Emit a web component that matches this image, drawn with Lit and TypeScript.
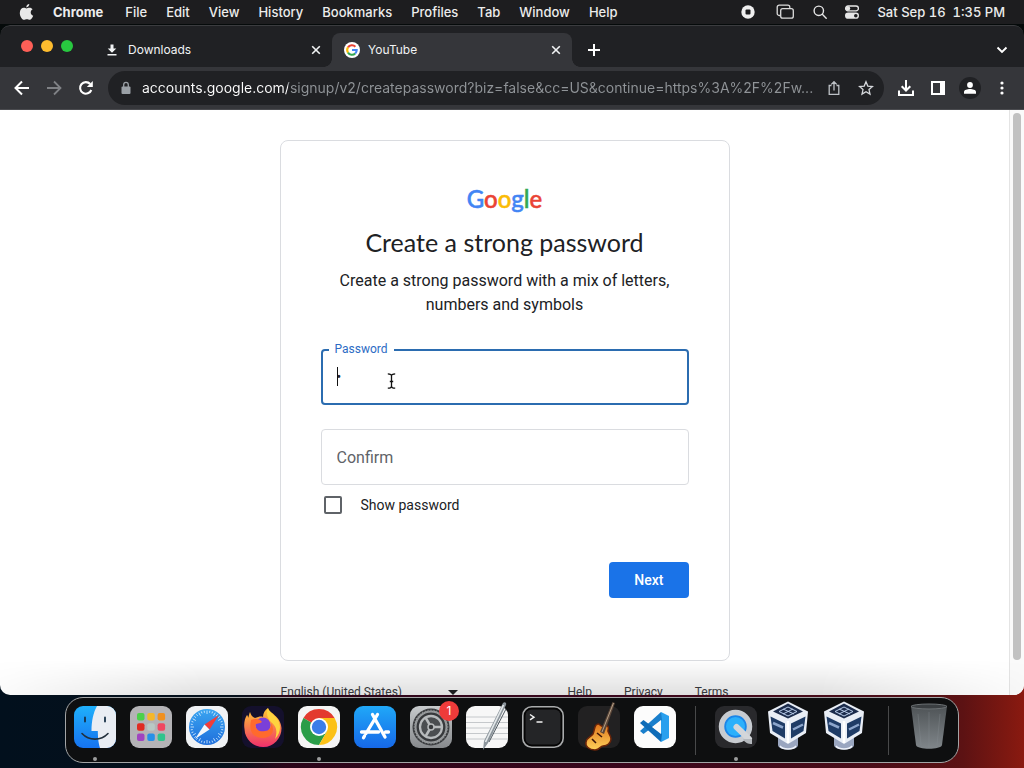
import { LitElement, html, css, svg, TemplateResult } from "lit";
import { customElement, property } from "lit/decorators.js";

const reset = css`
  *, *::before, *::after { box-sizing: border-box; }
  button { appearance: none; background: none; border: 0; padding: 0; margin: 0; font: inherit; color: inherit; }
  svg { display: block; }
  a { color: inherit; text-decoration: none; }
`;

@customElement("menu-bar")
class MenuBar extends LitElement {
  static styles = [reset, css`
    :host { display: block; }
    .bar { display: flex; align-items: center; height: 24px; padding: 0 19px; background: #1d1d1f; color: #ececec;
      font: 500 13px/24px Inter, sans-serif; white-space: pre; }
    .menus { display: flex; align-items: center; gap: 19px; }
    .app { font-weight: 700; padding-right: 3px; }
    .status { display: flex; align-items: center; gap: 17px; margin-left: auto; font-variant-numeric: tabular-nums; }
    .rec { padding-right: 4px; }
  `];
  render() {
    return html`<header class="bar">
      <nav class="menus">
        <button aria-label="Apple menu"><svg width="15" height="18" viewBox="0 0 15 18" fill="#e8e8e8"><path d="M10.3 1c.1 1.900-1.300 3.300-3 3.400C7.200 2.600 8.600 1.100 10.300 1zM7.500 5.400c.8 0 1.500-.7 3-.7 1.400 0 2.500.7 3.100 1.500-2.800 1.700-2.300 5.500.6 6.600-.8 2.200-2 4-3.500 4-1 0-1.500-.6-2.800-.6-1.300 0-1.900.6-2.800.6C2.900 16.800.8 13 .8 9.900c0-3.200 2-5.100 4-5.100 1.200 0 2 .6 2.700.6z"/></svg></button>
        <button class="app">Chrome</button>
        ${["File", "Edit", "View", "History", "Bookmarks", "Profiles", "Tab", "Window", "Help"].map(m => html`<button>${m}</button>`)}
      </nav>
      <div class="status">
        <button class="rec" aria-label="Recording"><svg width="14" height="14" viewBox="0 0 14 14"><circle cx="7" cy="7" r="6.700" fill="#efefef"/><rect x="4.500" y="4.500" width="5" height="5" rx="1" fill="#1d1d1f"/></svg></button>
        <button aria-label="Windows"><svg width="20" height="16" viewBox="0 0 20 16" fill="none" stroke="#dcdcdc" stroke-width="1.300"><path d="M4 11.500H3.200A2 2 0 0 1 1.200 9.500V3.200a2 2 0 0 1 2-2h8.600a2 2 0 0 1 2 2V4"/><rect x="4.700" y="4.700" width="12.600" height="9.500" rx="2"/></svg></button>
        <button aria-label="Search"><svg width="14" height="14" viewBox="0 0 14 14" fill="none" stroke="#e6e6e6" stroke-width="1.400" stroke-linecap="round"><circle cx="5.800" cy="5.800" r="4.700"/><path d="M9.300 9.300l3.900 3.900"/></svg></button>
        <button aria-label="Control center"><svg width="16" height="14" viewBox="0 0 16 14"><rect x="1.600" y="1" width="12.800" height="4.800" rx="2.400" fill="none" stroke="#e6e6e6" stroke-width="1.300"/><circle cx="4" cy="3.400" r="2.200" fill="#e6e6e6"/><rect x="1" y="7.600" width="14" height="6.200" rx="3.100" fill="#e6e6e6"/><circle cx="11.800" cy="10.700" r="1.800" fill="#1d1d1f"/></svg></button>
        <time>Sat Sep 16  1:35 PM</time>
      </div>
    </header>`;
  }
}

const closeIcon = svg`<svg width="12" height="12" viewBox="0 0 12 12" stroke="#f1f3f4" stroke-width="1.600"><path d="M2.200 2.200l7.600 7.600M9.800 2.200L2.200 9.800"/></svg>`;

@customElement("browser-chrome")
class BrowserChrome extends LitElement {
  static styles = [reset, css`
    :host { display: block; }
    .strip { display: flex; align-items: flex-end; height: 42px; background: #202124; border-top: 1px solid #3b3c3f; color: #f1f3f4;
      font: 400 12px/34px Inter, sans-serif; border-radius: 10px 10px 0 0; }
    .lights { display: flex; gap: 8px; align-self: flex-start; padding: 14px 19px 0 21px; }
    .light { width: 12px; height: 12px; border-radius: 50%; background: #fe5f57; }
    .light.min { background: #febc2e; }
    .light.max { background: #28c840; }
    .tab { display: flex; align-items: center; flex: 0 1 240px; min-width: 0; height: 34px; padding: 0 10px 0 12px; position: relative; }
    .tab .name { flex: 1; text-align: left; padding-left: 8px; }
    .tab svg { flex: none; }
    .tab.on { background: #35363a; border-radius: 8px 8px 0 0; }
    .tab.on::before, .tab.on::after { content: ""; position: absolute; bottom: 0; width: 8px; height: 8px; }
    .tab.on::before { right: 100%; background: radial-gradient(circle at 0 0, #202124 7.500px, #35363a 8px); }
    .tab.on::after { left: 100%; background: radial-gradient(circle at 100% 0, #202124 7.500px, #35363a 8px); }
    .cell { display: grid; place-items: center; width: 32px; height: 34px; flex: none; }
    .new { margin-left: 6px; }
    .more { margin: 0 6px 0 auto; }
    .toolbar { display: flex; align-items: center; height: 43px; padding: 0 6px; background: #35363a; border-bottom: 1px solid #4a4b4f; }
    .omni { flex: 1; min-width: 0; display: flex; align-items: center; height: 34px; margin: 0 6px; padding: 0 2px 0 12px; border-radius: 17px; background: #202124; }
    .omni svg { flex: none; }
    .url { flex: 1; min-width: 0; margin: 0 0 0 10px; padding: 0; border: 0; outline: 0; height: 34px; font: 400 14px/34px Inter, sans-serif;
      text-overflow: ellipsis; color: transparent;
      background: linear-gradient(90deg, #ffffff 146px, #909498 146px); background-clip: text; -webkit-background-clip: text; }
    .avatar { display: grid; place-items: center; width: 22px; height: 22px; border-radius: 50%; background: #202124; }
  `];
  render() {
    return html`
      <div class="strip">
        <div class="lights"><button class="light" aria-label="Close"></button><button class="light min" aria-label="Minimize"></button><button class="light max" aria-label="Zoom"></button></div>
        <div class="tab">
          <svg width="16" height="16" viewBox="0 0 16 16" fill="#f1f3f4"><path d="M6.500 2.500h3v4h2.800L8 10.800 3.700 6.500h2.800zM3.500 12h9v1.500h-9z"/></svg>
          <button class="name">Downloads</button><button aria-label="Close tab">${closeIcon}</button>
        </div>
        <div class="tab on">
          <svg width="16" height="16" viewBox="0 0 16 16"><circle cx="8" cy="8" r="8" fill="#fff"/><g fill="none" stroke-width="2.100"><path d="M4 5.400A4.700 4.700 0 0 1 11.400 4.700" stroke="#ea4335"/><path d="M4 10.600A4.700 4.700 0 0 1 4 5.400" stroke="#fbbc05"/><path d="M11.200 11.500A4.700 4.700 0 0 1 4 10.600" stroke="#34a853"/><path d="M8 8h4.700A4.700 4.700 0 0 1 11.200 11.500" stroke="#4285f4"/></g></svg>
          <button class="name">YouTube</button><button aria-label="Close tab">${closeIcon}</button>
        </div>
        <button class="cell new" aria-label="New tab"><svg width="14" height="14" viewBox="0 0 14 14" stroke="#fff" stroke-width="2"><path d="M7 1v12M1 7h12"/></svg></button>
        <button class="cell more" aria-label="Search tabs"><svg width="12" height="12" viewBox="0 0 12 12" fill="none" stroke="#fff" stroke-width="1.900"><path d="M1.500 3.500L6 8l4.500-4.500"/></svg></button>
      </div>
      <div class="toolbar">
        <button class="cell" aria-label="Back"><svg width="16" height="16" viewBox="0 0 16 16" fill="none" stroke="#fff" stroke-width="2"><path d="M15 8H2.500M8 1.500L1.500 8 8 14.500"/></svg></button>
        <button class="cell" aria-label="Forward"><svg width="16" height="16" viewBox="0 0 16 16" fill="none" stroke="#7f8185" stroke-width="1.800"><path d="M1 8h12.500M8 1.500L14.500 8 8 14.500"/></svg></button>
        <button class="cell" aria-label="Reload"><svg width="16" height="16" viewBox="0 0 16 16"><path d="M13.300 10A5.800 5.800 0 1 1 12.200 4" fill="none" stroke="#fff" stroke-width="2.100"/><path d="M14.800 1v6h-6z" fill="#fff"/></svg></button>
        <div class="omni">
          <svg width="12" height="14" viewBox="0 0 12 14"><rect x="1.500" y="5.500" width="9" height="7.500" rx="1" fill="#9aa0a6"/><path d="M3.700 6V3.700a2.300 2.300 0 0 1 4.600 0V6" fill="none" stroke="#9aa0a6" stroke-width="1.300"/></svg>
          <input class="url" aria-label="Address" value="accounts.google.com/signup/v2/createpassword?biz=false&cc=US&continue=https%3A%2F%2Fw..."/>
          <button class="cell" aria-label="Share"><svg width="14" height="16" viewBox="0 0 14 16" fill="none" stroke="#bdc1c6" stroke-width="1.300"><path d="M4.500 5.500H2.200v8.800h9.600V5.500H9.500M7 10.500V2M4.300 4.400L7 1.700l2.700 2.700"/></svg></button>
          <button class="cell" aria-label="Bookmark"><svg width="16" height="16" viewBox="0 0 16 16" fill="none" stroke="#d5d8dc" stroke-width="1.300"><path d="M8 1.800l1.800 4.300 4.700.4-3.500 3.100 1 4.500L8 11.700l-4 2.400 1-4.500L1.500 6.500l4.700-.4z"/></svg></button>
        </div>
        <button class="cell" aria-label="Downloads"><svg width="18" height="18" viewBox="0 0 18 18" fill="none" stroke="#fff" stroke-width="2"><path d="M9 1v10M4.700 7.200L9 11.500l4.300-4.300M2 11.500V16h14v-4.500"/></svg></button>
        <button class="cell" aria-label="Side panel"><svg width="14" height="14" viewBox="0 0 14 14"><path d="M0 0h14v14H0zM2 2v10h7V2z" fill="#fff" fill-rule="evenodd"/></svg></button>
        <button class="cell" aria-label="Profile"><span class="avatar"><svg width="14" height="14" viewBox="0 0 14 14" fill="#fff"><circle cx="7" cy="4" r="2.900"/><path d="M1 12.800V11c0-2 3.500-2.900 6-2.900s6 .9 6 2.900v1.800z"/></svg></span></button>
        <button class="cell" aria-label="Menu"><svg width="4" height="14" viewBox="0 0 4 14" fill="#fff"><circle cx="2" cy="2" r="1.600"/><circle cx="2" cy="7" r="1.600"/><circle cx="2" cy="12" r="1.600"/></svg></button>
      </div>`;
  }
}

@customElement("signup-page")
class SignupPage extends LitElement {
  static styles = [reset, css`
    :host { display: flex; min-height: 0; flex: 1; background: #fff; overflow: hidden; position: relative; }
    .page { flex: 1; min-width: 0; display: flex; flex-direction: column; align-items: center; padding-top: 30px; font-family: Roboto, sans-serif; color: #202124; }
    .card { width: 450px; max-width: 100%; flex: none; padding: 42px 40px 62px; border: 1px solid #dadce0; border-radius: 8px; }
    .logo { text-align: center; font: 500 24px/32px Lato, sans-serif; color: #4285f4; -webkit-text-stroke: 0.500px currentColor; }
    .red { color: #ea4335; } .yellow { color: #fbbc05; } .green { color: #34a853; }
    h1 { margin: 10px 0 0; text-align: center; font: 400 25px/34px Lato, sans-serif; }
    .sub { margin: 10px 0 32px; text-align: center; font-size: 16px; line-height: 24px; }
    .field { position: relative; height: 56px; margin-bottom: 24px; }
    .field input { width: 100%; height: 56px; padding: 0 15px; border: 1px solid #dadce0; border-radius: 4px; outline: 0; background: transparent; font: 400 16px/24px Roboto, sans-serif; color: #202124; }
    .field input::placeholder { color: #5f6368; opacity: 1; }
    .field.on input { border: 2px solid #2b6cb0; padding: 0 14px; font-size: 14px; }
    .field.on label { position: absolute; left: 8px; top: -8px; padding: 0 6px; background: #fff; font-size: 12px; line-height: 16px; color: #2d6bc4; z-index: 1; }
    .caret { position: absolute; left: 16px; top: 18px; width: 1px; height: 19px; background: #111; }
    .beam { position: absolute; left: 66px; top: 24px; }
    .show { display: flex; align-items: center; gap: 19px; margin: -20px 0 0 3px; height: 32px; font-size: 14px; }
    .show input { appearance: none; width: 18px; height: 18px; margin: 0; border: 2px solid #5f6368; border-radius: 2px; }
    .actions { display: flex; justify-content: flex-end; margin-top: 41px; }
    .next { height: 36px; padding: 0 25px; border-radius: 4px; background: #1a73e8; color: #fff; font-weight: 500; font-size: 14px; }
    footer { width: 450px; max-width: 100%; display: flex; align-items: center; padding: 23px 1px 0; font-size: 12px; line-height: 16px; color: #3c4043; }
    .lang { position: relative; display: flex; align-items: center; width: 177px; }
    .lang svg { position: absolute; right: 0; }
    .lang select { appearance: none; border: 0; background: none; width: 100%; padding: 0; font: inherit; color: inherit; }
    .links { display: flex; gap: 32px; margin-left: auto; }
    .track { width: 15px; border-left: 1px solid #e4e4e4; background: #fafafa; padding: 3px 3px 0 3px; }
    .thumb { width: 8px; height: 94%; border-radius: 4px; background: #c1c1c1; }
    .shade { position: absolute; left: 0; right: 0; bottom: 0; height: 36px; pointer-events: none; background: linear-gradient(rgba(0,0,0,0), rgba(0,0,0,.12));
      mask-image: linear-gradient(90deg, rgba(0,0,0,.15), #000 20%, #000 80%, rgba(0,0,0,.1)); }
  `];
  render() {
    return html`
      <main class="page">
        <form class="card" @submit=${(e: Event) => e.preventDefault()}>
          <div class="logo">G<span class="red">o</span><span class="yellow">o</span>g<span class="green">l</span><span class="red">e</span></div>
          <h1>Create a strong password</h1>
          <p class="sub">Create a strong password with a mix of letters, numbers and symbols</p>
          <div class="field on">
            <label for="pw">Password</label><input id="pw" type="password" value="a"/>
            <span class="caret"></span>
            <svg class="beam" width="9" height="16" viewBox="0 0 9 16" fill="none" stroke="#111" stroke-width="1.300"><path d="M.8.800C3.200.8 4.500 1.500 4.500 3v10c0 1.500-1.300 2.200-3.700 2.200M8.200.8C5.800.8 4.500 1.500 4.500 3v10c0 1.500 1.300 2.200 3.700 2.200M2.800 8.500h3.400"/></svg>
          </div>
          <div class="field"><input id="confirm" type="password" aria-label="Confirm" placeholder="Confirm"/></div>
          <label class="show"><input type="checkbox"/>Show password</label>
          <div class="actions"><button class="next">Next</button></div>
        </form>
        <footer>
          <div class="lang"><select aria-label="Language"><option>English (United States)</option></select><svg width="10" height="5" viewBox="0 0 10 5"><path d="M0 0h10L5 5z" fill="#202124"/></svg></div>
          <nav class="links"><a href="#">Help</a><a href="#">Privacy</a><a href="#">Terms</a></nav>
        </footer>
      </main>
      <div class="track"><div class="thumb"></div></div>
      <div class="shade"></div>`;
  }
}

const launchColors = ["#4cd04a", "#f5b72b", "#f0901f", "#e02b22", "#b9c8c4", "#f04660", "#a044c0", "#2690e8", "#2fc48c"];
const ticks = Array.from({ length: 36 }, (_, i) => i * 10);

const box = svg`<g transform="translate(-3 0)">
  <path d="M10 32v7c0 6 20 6 20 0v-7z" fill="#9aa6c0"/><path d="M12 40c3 4 13 4 16 0" stroke="#eef2fa" stroke-width="1.500" fill="none"/>
  <path d="M20 -4.500L40 5.500 38 27 20 38 2 27 0 5.500z" fill="#e9eef6"/>
  <path d="M20 -2.500L35 5.500 20 12.500 5 5.500z" fill="#1c2c4c"/><path d="M11 5.500l9-4.500 9 4.500-9 4.500zM15 3l11 5M25 3l-10 5" stroke="#b9cdea" stroke-width="1" fill="none"/>
  <path d="M2.500 10.500L17 17.500V32.500L4.500 25z" fill="#1f3c66"/><path d="M37.500 10.500L23 17.500V32.500L35.500 25z" fill="#1f3c66"/>
  <path d="M5 17l10 4.500M25 23.500l10-5" stroke="#8da6cc" stroke-width="2.500"/><path d="M20 15v22" stroke="#fff" stroke-width="2.500"/></g>`;

interface DockItem { name: string; art?: TemplateResult; dot?: boolean; badge?: string; }
const items: DockItem[] = [
  { name: "Finder", dot: true, art: svg`<rect width="42" height="42" rx="9" fill="url(#fb)"/><path d="M23 0h10a9 9 0 0 1 9 9v24a9 9 0 0 1-9 9h-7c-1.500-5-2-9-2.200-17H17.500C17.500 15 19.500 6 23 0z" fill="#e9edf3"/><path d="M11 11.500v4M31 11.500v4" stroke="#173047" stroke-width="1.800" stroke-linecap="round"/><path d="M8 27.500c7 7.500 19 7.500 26 0" fill="none" stroke="#22303c" stroke-width="1.600" stroke-linecap="round"/>` },
  { name: "Launchpad", art: svg`<rect width="42" height="42" rx="9" fill="#b4b3b6"/>${launchColors.map((c, i) => svg`<rect x="${7 + (i % 3) * 10.300}" y="${7 + Math.floor(i / 3) * 10.300}" width="7.500" height="7.500" rx="2" fill="${c}"/>`)}` },
  { name: "Safari", art: svg`<rect width="42" height="42" rx="9" fill="#f0f2f4"/><circle cx="21" cy="21" r="18" fill="url(#sf)"/>${ticks.map(t => svg`<path d="M21 4.500v${t % 30 ? 2 : 3.500}" stroke="#d9efff" stroke-width=".8" transform="rotate(${t} 21 21)"/>`)}<path d="M33 9L23.500 23.500 18.500 18.500z" fill="#f23d3a"/><path d="M9 33l9.500-14.500 5 5z" fill="#f5f7fa"/>` },
  { name: "Firefox", art: svg`<rect width="42" height="42" rx="9" fill="#14102c"/><path d="M8 6c1 3 2 5 5 6 3-1 6-2 8-1 0-4 2-7 5-9 1 5 13 8 13.500 20A18.500 18.500 0 0 1 2.500 23C1.500 17 3 12 5 9c1 1 1 2 1 3 1-2 1-4 2-6z" fill="url(#ff)"/><circle cx="21" cy="19" r="7.500" fill="#7a3fd8"/><path d="M9 14c5-2 9-1 11 2-2 2-6 1-7 3 1 6 6 7 10 6 4 0 7-3 6-8 5 8 0 15-8 15S6 27 9 14z" fill="#ff6a2c"/><path d="M26 2c1 6 12 8 12 19 0 5-2 9-5 12 3-8 1-13-4-17-4-4-5-9-3-14z" fill="#ffd43e"/>` },
  { name: "Chrome", dot: true, art: svg`<rect width="42" height="42" rx="9" fill="#f4f4f4"/><path d="M21 21L5.400 12A18 18 0 0 1 36.600 12z" fill="#e33b2e"/><path d="M21 21l7.800 4.500L21 39A18 18 0 0 1 5.400 12z" fill="#2a9d48"/><path d="M21 12h15.600A18 18 0 0 1 21 39l7.800-13.500z" fill="#fbc116"/><circle cx="21" cy="21" r="9" fill="#fff"/><circle cx="21" cy="21" r="7.200" fill="#3b7de8"/>` },
  { name: "App Store", art: svg`<rect width="42" height="42" rx="9" fill="url(#as)"/><g stroke="#fff" stroke-width="3.300" stroke-linecap="round"><path d="M23.500 8.500L12 27.500M18.500 8.500L31 31M7.500 26h17M31.500 26h3M10.500 30l-1 1.800"/></g>` },
  { name: "System Settings", badge: "1", art: svg`<rect width="42" height="42" rx="9" fill="url(#st)"/><circle cx="21" cy="21" r="18.500" fill="#37393c"/><circle cx="21" cy="21" r="15.500" fill="none" stroke="#9a9d9f" stroke-width="2"/>${ticks.map(t => svg`<path d="M21 3.500v2.500" stroke="#8d9092" stroke-width="1" transform="rotate(${t} 21 21)"/>`)}<circle cx="21" cy="21" r="11" fill="#4a4d50" stroke="#b7babc" stroke-width="2.300"/><path d="M21 21L15.500 11.500M21 21h11M21 21l-5.500 9.500" stroke="#b7babc" stroke-width="2.500"/><circle cx="21" cy="21" r="3" fill="#37393c" stroke="#b7babc" stroke-width="1.500"/>` },
  { name: "TextEdit", art: svg`<rect width="42" height="42" rx="9" fill="#f7f7f7"/><path d="M0 11h42M0 16.500h42M0 22h42M0 27.500h42M0 33h42" stroke="#c5c8cb" stroke-width="1"/><path d="M37-3c2-2 4 0 3 2L22 37l-5 7 1-9z" fill="#8b949b"/><path d="M37.500-1L19.500 36" stroke="#e4e8ea" stroke-width="1.700"/><path d="M40 3L23 36" stroke="#505a62" stroke-width="1"/>` },
  { name: "Terminal", art: svg`<rect x=".8" y=".8" width="40.400" height="40.400" rx="9" fill="#050505" stroke="#a9abac" stroke-width="1.600"/><rect x="3.500" y="3.500" width="35" height="35" rx="6" fill="#242527"/><path d="M8 8.500l4 2.700-4 2.700M14.500 16h6" stroke="#f4f4f4" stroke-width="1.400" fill="none"/>` },
  { name: "GarageBand", art: svg`<rect width="42" height="42" rx="9" fill="#222122"/><path d="M17 21c1-3 4-4 5-2 1 1 3 2 5 1 3-1 4 1 3 4-1 2 3 5 3 9 0 4-4 7-8 7-3 0-3 4-8 4-6 0-10-4-9-8 1-5 5-5 7-8 1-2 1-4 2-7z" fill="url(#gb)" stroke="#6b2408" stroke-width="1.500"/><path d="M34.500 -4l2.500 1L26 28l-4-2z" fill="#5a4538"/><path d="M35.500 -3L24 26" stroke="#c9b69c" stroke-width=".8"/><path d="M14 33l4 4M19 27l5 4" stroke="#3b1408" stroke-width="1.600"/>` },
  { name: "Visual Studio Code", art: svg`<rect width="42" height="42" rx="9" fill="#fcfcfc"/><path d="M27 6l8 4v22l-8 4z" fill="#2aa0ee"/><path d="M27 6L6 25l3.500 3L28 14z" fill="#1a7fcc"/><path d="M27 36L6 17l3.500-3L28 28z" fill="#0f6cb8"/><path d="M27 14v14l-9-7z" fill="#fcfcfc"/>` },
  { name: "" },
  { name: "QuickTime Player", dot: true, art: svg`<rect width="42" height="42" rx="9" fill="#29292c"/><circle cx="20.500" cy="20.500" r="14" fill="#1c86e8" stroke="#c8ccd1" stroke-width="5.500"/><circle cx="20.500" cy="20.500" r="9.500" fill="#2bb0fb"/><path d="M21.500 21L34 33" stroke="#d3d6da" stroke-width="6" stroke-linecap="round"/><path d="M28 33h9v5c-4 0-7-1-9-5z" fill="#b4b8bd"/>` },
  { name: "VirtualBox", art: box },
  { name: "VirtualBox VM", art: box },
  { name: "" },
  { name: "Trash", art: svg`<path d="M3 0l5 39c1 5 25 5 26 0L39 0z" fill="url(#tr)"/><ellipse cx="21" cy=".5" rx="18" ry="2.500" fill="#3b3f42" stroke="#6d7275" stroke-width="1"/><path d="M10 8l3 31M32 8l-3 31M21 6v36" stroke="#868d92" stroke-width="1" opacity=".35"/>` },
];

@customElement("app-dock")
class AppDock extends LitElement {
  static styles = [reset, css`
    :host { display: flex; justify-content: center; padding: 2px 0 5px; }
    .dock { display: flex; gap: 14px; height: 66px; padding: 8px; border: 1px solid #a3a5a6; border-radius: 18px; background: #0e0f10; }
    .item { position: relative; width: 42px; height: 42px; flex: none; }
    .item svg { overflow: visible; }
    .sep { width: 1px; height: 49px; margin: 0 5px; background: #48494a; }
    .dot { position: absolute; left: 19px; top: 51px; width: 4px; height: 4px; border-radius: 50%; background: #9c9d9e; }
    .badge { position: absolute; right: -7px; top: -5px; width: 20px; height: 20px; border-radius: 50%; background: #ee3b3a; color: #fff; font: 400 12px/20px Inter, sans-serif; text-align: center; }
    .defs { position: absolute; width: 0; height: 0; }
  `];
  @property({ attribute: false }) items = items;
  private gradient(id: string, from: string, to: string) {
    return svg`<linearGradient id="${id}" x1="0" y1="0" x2="0" y2="1"><stop offset="0" stop-color="${from}"/><stop offset="1" stop-color="${to}"/></linearGradient>`;
  }
  render() {
    return html`
      <svg class="defs"><defs>
        ${this.gradient("fb", "#1fb0fb", "#1673f0")}${this.gradient("sf", "#3aa5f0", "#1f6fdc")}${this.gradient("ff", "#ffc830", "#f0306c")}
        ${this.gradient("as", "#20a8f8", "#1668e8")}${this.gradient("st", "#c7cacc", "#86898c")}${this.gradient("gb", "#e0761c", "#ffd05a")}${this.gradient("tr", "#4e5356", "#80868a")}
      </defs></svg>
      <nav class="dock">${this.items.map(i => i.art
        ? html`<button class="item" aria-label=${i.name}><svg width="42" height="42" viewBox="0 0 42 42">${i.art}</svg>${i.badge ? html`<span class="badge">${i.badge}</span>` : ""}${i.dot ? html`<span class="dot"></span>` : ""}</button>`
        : html`<span class="sep"></span>`)}</nav>`;
  }
}

@customElement("app-root")
class AppRoot extends LitElement {
  static styles = css`
    :host { display: flex; flex-direction: column; height: 100vh; overflow: hidden;
      background: linear-gradient(#050a0a, #050a0a) 0 0 / 100% 60px no-repeat,
        linear-gradient(90deg, #02101d 0%, #05101b 23%, #2b0519 28%, #3a061c 60%, #4a0c18 85%, #5c1213 94%, #8a1a10 100%); }
    .window { flex: 1; min-height: 0; display: flex; flex-direction: column; margin-top: 1px; border-radius: 10px; overflow: hidden; }
  `;
  render() {
    return html`<menu-bar></menu-bar>
      <section class="window"><browser-chrome></browser-chrome><signup-page></signup-page></section>
      <app-dock></app-dock>`;
  }
}
